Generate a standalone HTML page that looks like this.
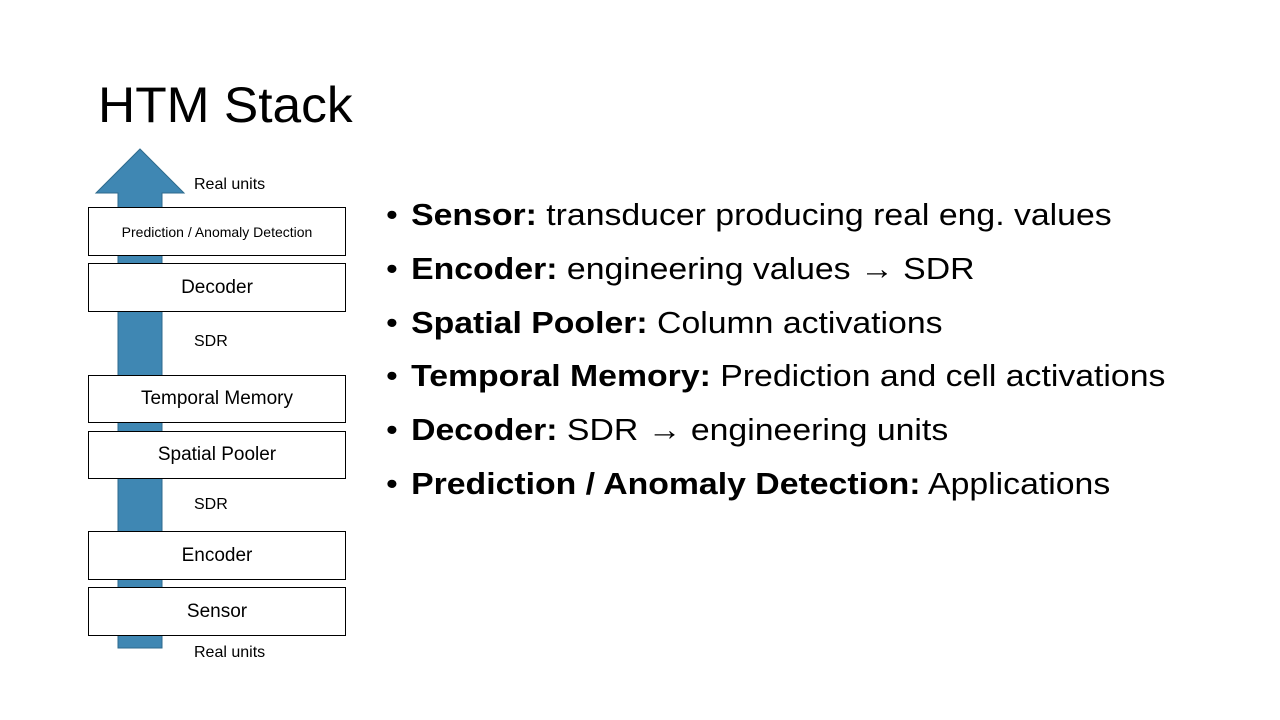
<!DOCTYPE html>
<html><head><meta charset="utf-8"><style>
body{margin:0;width:1280px;height:720px;background:#fff;position:relative;overflow:hidden;font-family:"Liberation Sans",sans-serif;color:#000}
.t{position:absolute;left:98px;top:76px;font-size:50px;white-space:nowrap;transform-origin:0 0;transform:scaleX(1.03)}
.box{position:absolute;left:88px;width:256px;border:1px solid #000;background:#fff;display:flex;align-items:center;justify-content:center;font-size:19px;white-space:nowrap}
.lbl{position:absolute;left:194px;font-size:16px;white-space:nowrap}
.b{position:absolute;left:386px;font-size:31px;white-space:nowrap;transform-origin:0 50%;transform:scaleX(1.09);line-height:36px}
.b::before{content:"•";position:absolute;left:0}
.b .tx{margin-left:23px}
.ar{font-weight:bold}
</style></head><body>
<div class="t">HTM Stack</div>
<svg style="position:absolute;left:0;top:0" width="400" height="720">
<polygon points="140,149 184,193 162,193 162,648 118,648 118,193 96,193" fill="#3f87b3" stroke="#2e6a8c" stroke-width="1"/>
</svg>
<div class="lbl" style="top:176px">Real units</div>
<div class="box" style="top:207px;height:47px;font-size:14px"><span>Prediction / Anomaly Detection</span></div>
<div class="box" style="top:263px;height:47px"><span>Decoder</span></div>
<div class="lbl" style="top:333px">SDR</div>
<div class="box" style="top:375px;height:46px"><span>Temporal Memory</span></div>
<div class="box" style="top:431px;height:46px"><span>Spatial Pooler</span></div>
<div class="lbl" style="top:496px">SDR</div>
<div class="box" style="top:531px;height:47px"><span>Encoder</span></div>
<div class="box" style="top:587px;height:47px"><span>Sensor</span></div>
<div class="lbl" style="top:644px">Real units</div>
<div class="b" style="top:197px"><span class="tx"><b>Sensor:</b> transducer producing real eng. values</span></div>
<div class="b" style="top:251px"><span class="tx"><b>Encoder:</b> engineering values <span class="ar">→</span> SDR</span></div>
<div class="b" style="top:305px"><span class="tx"><b>Spatial Pooler:</b> Column activations</span></div>
<div class="b" style="top:358px"><span class="tx"><b>Temporal Memory:</b> Prediction and cell activations</span></div>
<div class="b" style="top:412px"><span class="tx"><b>Decoder:</b> SDR <span class="ar">→</span> engineering units</span></div>
<div class="b" style="top:466px"><span class="tx"><b>Prediction / Anomaly Detection:</b> Applications</span></div>
</body></html>
